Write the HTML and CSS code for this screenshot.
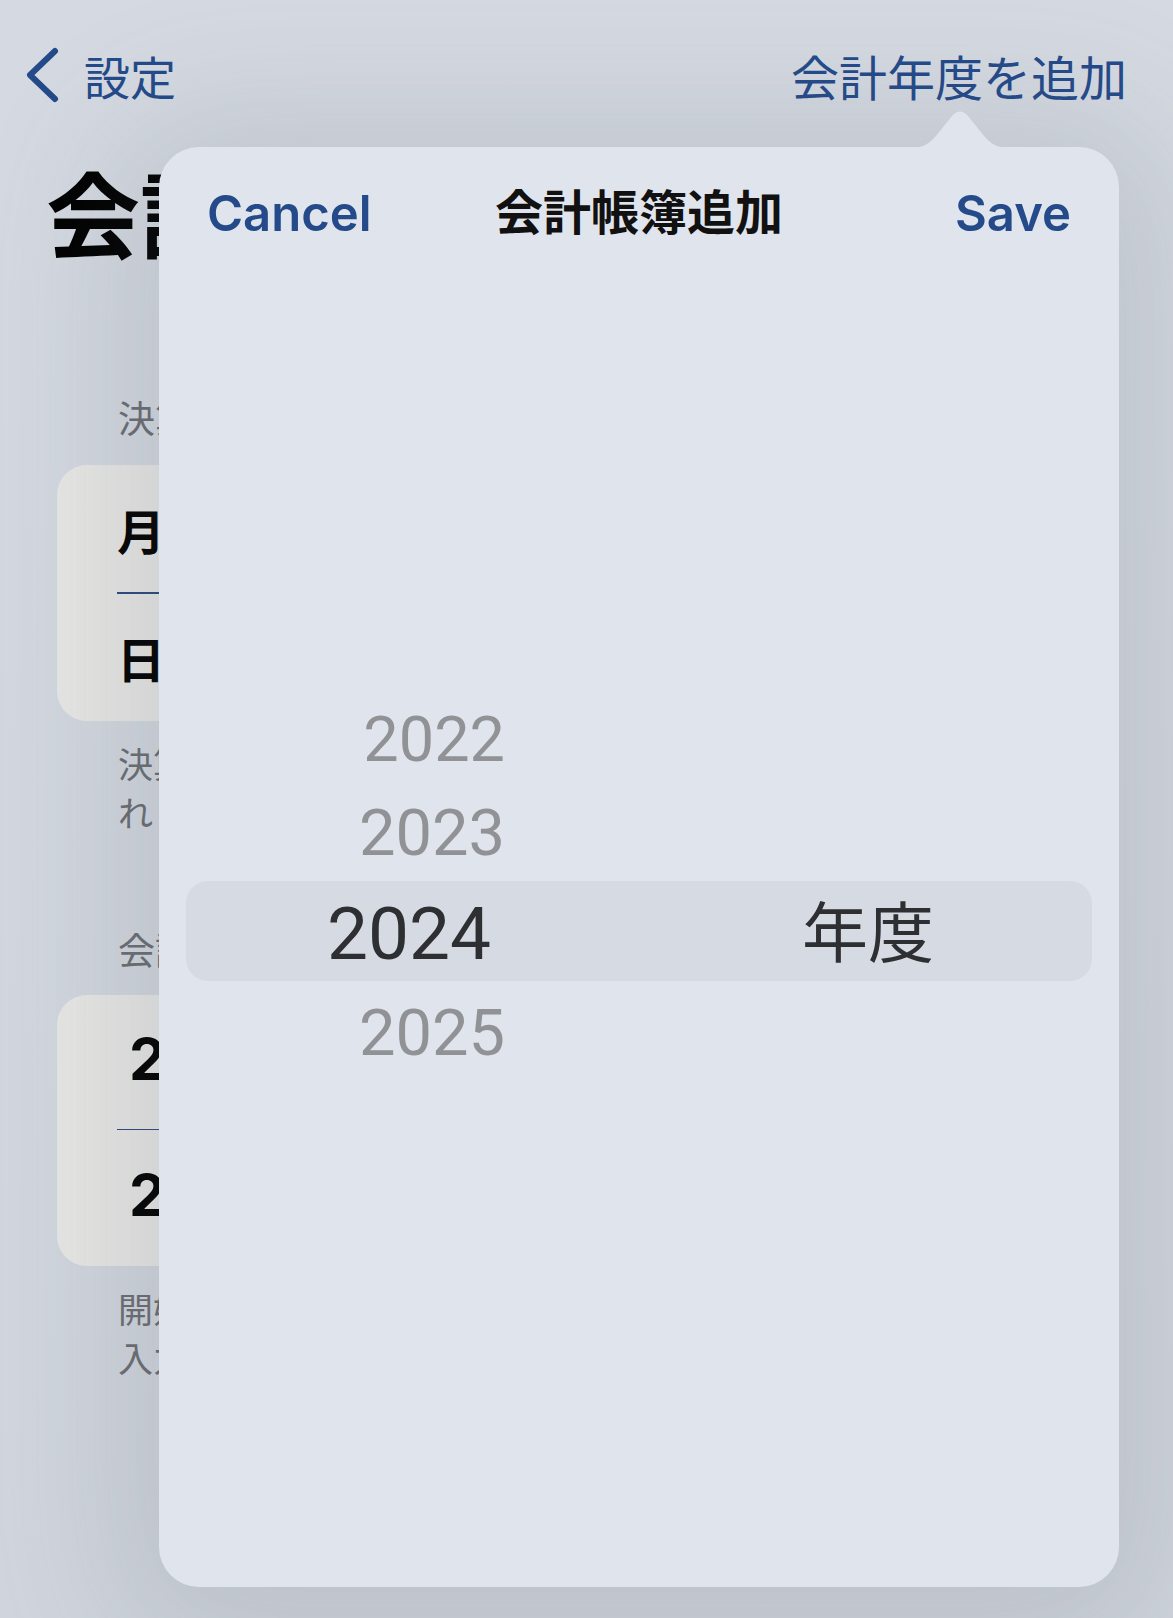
FILE: index.html
```html
<!DOCTYPE html>
<html lang="ja">
<head>
<meta charset="utf-8">
<title>会計年度</title>
<link rel="stylesheet" href="styles.css">
</head>
<body>
<div class="page">
  <header class="nav">
    <div class="back">
      <svg class="chev" width="36" height="58" viewBox="0 0 36 58"><path d="M31 5 L6 29 L31 53" fill="none" stroke="#244a8a" stroke-width="6" stroke-linecap="round" stroke-linejoin="round"/></svg>
      <span class="nav-text">設定</span>
    </div>
    <span class="nav-text nav-action">会計年度を追加</span>
  </header>
  <h1 class="large-title">会計年度</h1>

  <section class="group">
    <div class="group-header">決算日</div>
    <div class="card card-a">
      <div class="row"><span class="row-label">月</span><span class="row-value">3月</span></div>
      <div class="divider"></div>
      <div class="row"><span class="row-label">日</span><span class="row-value">31日</span></div>
    </div>
    <div class="group-footer">決算日を変更すると、会計期間が更新さ<br>れます。</div>
  </section>

  <section class="group group-2">
    <div class="group-header">会計期間</div>
    <div class="card card-b">
      <div class="row row-num row-num-1"><span class="row-num-text">2024年4月1日</span></div>
      <div class="divider"></div>
      <div class="row row-num row-num-2"><span class="row-num-text">2025年3月31日</span></div>
    </div>
    <div class="group-footer">開始日と終了日は決算日から自動で<br>入力されます。</div>
  </section>
</div>

<div class="popover">
  <svg class="arrow" width="110" height="42" viewBox="0 0 110 42"><path d="M0 42 C16 42 22 40 30 31 L47 10 Q55 1 63 10 L80 31 C88 40 94 42 110 42 Z" fill="#e0e4ec"/></svg>
  <div class="pop-header">
    <span class="pop-btn pop-cancel">Cancel</span>
    <span class="pop-title">会計帳簿追加</span>
    <span class="pop-btn pop-save">Save</span>
  </div>
  <div class="picker">
    <div class="prow prow-1"><span class="year">2022</span></div>
    <div class="prow prow-2"><span class="year">2023</span></div>
    <div class="prow prow-sel"><span class="year">2024</span><span class="unit">年度</span></div>
    <div class="prow prow-4"><span class="year">2025</span></div>
  </div>
</div>
</body>
</html>
```

FILE: styles.css
```css
html, body {
  margin: 0;
  padding: 0;
}
body {
  width: 1173px;
  height: 1618px;
  overflow: hidden;
  position: relative;
  background: linear-gradient(180deg, #d5dae2 0%, #d1d6de 100%);
  font-family: "Noto Sans CJK JP", "Noto Sans", sans-serif;
}
.page {
  display: flex;
  flex-direction: column;
}
.nav {
  display: flex;
  justify-content: space-between;
  align-items: center;
  padding: 46px 46px 0 24px;
  height: 58px;
}
.back {
  display: flex;
  align-items: center;
  gap: 24px;
}
.chev {
  display: block;
}
.nav-text {
  font-size: 46px;
  line-height: 58px;
  color: #244a8a;
}
.nav-action {
  font-size: 48px;
}
.large-title {
  margin: 55px 0 0 46px;
  font-size: 94px;
  line-height: 104px;
  font-weight: 700;
  color: #000;
}
.group {
  padding: 0 57px;
  margin-top: 132px;
}
.group-2 {
  margin-top: 91px;
}
.group-header {
  padding-left: 61px;
  font-size: 37px;
  line-height: 44px;
  color: #6b6e73;
  margin-bottom: 26px;
}
.group-2 .group-header {
  margin-bottom: 24px;
}
.card {
  background: linear-gradient(90deg, #e8e8e6 0%, #e2e2e0 100%);
  border-radius: 30px;
  padding-left: 60px;
}
.card-a .row {
  height: 127px;
}
.card-b .row-num-1 {
  height: 134px;
}
.card-b .row-num-2 {
  height: 136px;
}
.row {
  display: flex;
  align-items: center;
  justify-content: space-between;
  padding-right: 60px;
}
.row-label {
  font-size: 48px;
  font-weight: 700;
  color: #000;
}
.row-value {
  font-size: 46px;
  color: #6b6e73;
}
.row-num-text {
  padding-left: 12px;
  padding-bottom: 14px;
  font-family: "Inter", "Noto Sans CJK JP", sans-serif;
  font-size: 58px;
  font-weight: 700;
  color: #000;
}
.divider {
  height: 1.5px;
  background: #2b4a80;
}
.group-footer {
  padding-left: 61px;
  margin-top: 17px;
  font-size: 35px;
  line-height: 49px;
  color: #6b6e73;
}

.popover {
  position: absolute;
  left: 159px;
  top: 147px;
  width: 960px;
  height: 1440px;
  background: #e0e4ec;
  border-radius: 40px;
  box-shadow: 0 20px 140px 50px rgba(80, 86, 100, 0.16);
  display: flex;
  flex-direction: column;
}
.arrow {
  position: absolute;
  left: 746px;
  top: -41px;
  display: block;
}
.pop-header {
  display: grid;
  grid-template-columns: 1fr auto 1fr;
  align-items: center;
  height: 132px;
  padding: 0 48px 0 48px;
}
.pop-btn {
  font-family: "Inter", "Roboto", sans-serif;
  font-size: 49px;
  font-weight: 600;
  color: #244a8a;
}
.pop-cancel {
  justify-self: start;
}
.pop-save {
  justify-self: end;
}
.pop-title {
  font-size: 48px;
  font-weight: 700;
  color: #111;
  padding-bottom: 8px;
}
.picker {
  display: flex;
  flex-direction: column;
  margin-top: 413px;
}
.prow {
  display: flex;
  align-items: center;
  font-family: "Roboto", "Noto Sans", sans-serif;
}
.prow .year {
  text-align: right;
  width: 346px;
  line-height: 1;
  color: #909296;
}
.prow-1 {
  height: 94px;
}
.prow-1 .year {
  font-size: 63px;
}
.prow-2 {
  height: 95px;
}
.prow-2 .year {
  font-size: 65px;
}
.prow-4 {
  height: 100px;
}
.prow-4 .year {
  font-size: 65px;
  padding-top: 4px;
}
.prow-sel {
  height: 100px;
  margin: 0 27px;
  border-radius: 22px;
  background: #d6dbe3;
}
.prow-sel .year {
  width: 305px;
  font-size: 73px;
  padding-top: 6px;
  color: #2e2f32;
}
.unit {
  margin-left: 311px;
  font-family: "Noto Sans CJK JP", sans-serif;
  font-size: 66px;
  line-height: 1;
  padding-bottom: 6px;
  color: #2e2f32;
}
```
